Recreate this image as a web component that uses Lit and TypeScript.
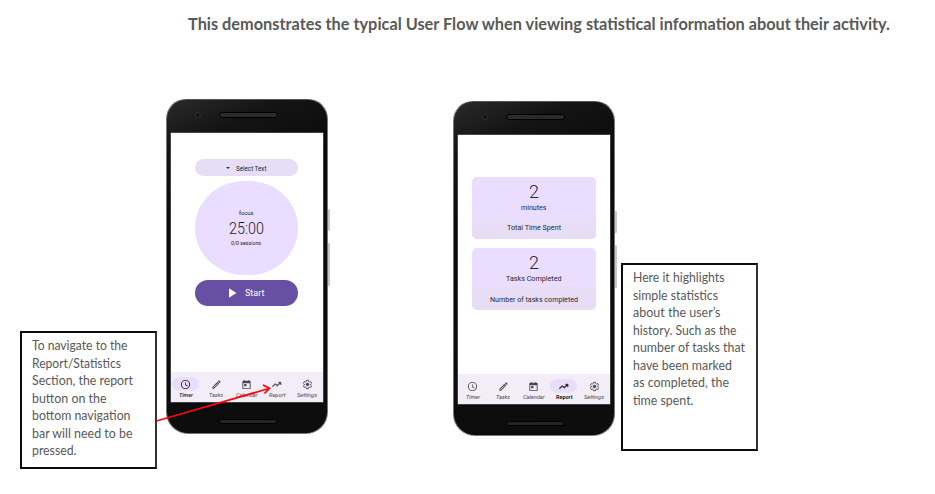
import { LitElement, html, svg, css } from "lit";
import { customElement, property } from "lit/decorators.js";

// One line of text, fitted to a given width and centred on its line height.
const line = (text: string, width: number, size: number, lh: number, cls = "") => html`
  <svg class="line ${cls}" width=${width} height=${lh}>
    <text x="0" y=${lh / 2 + size * 0.355} font-size=${size} textLength=${width} lengthAdjust="spacingAndGlyphs">${text}</text>
  </svg>`;

const lineStyles = css`
  .line { display: block; overflow: visible; flex: none; fill: currentColor; }
  .bold { font-weight: 700; }
  .medium { font-weight: 500; }
  .light { font-weight: 300; }
  .italic { font-style: italic; }
`;

const icons: Record<string, unknown> = {
  Timer: svg`<path d="M12 2a10 10 0 1 0 0 20 10 10 0 0 0 0-20zm0 18a8 8 0 1 1 0-16 8 8 0 0 1 0 16zm.5-13H11v6l5.2 3.2.8-1.3-4.5-2.7z"/>`,
  Tasks: svg`<path d="M14.06 9.02l.92.92L5.92 19H5v-.92l9.06-9.06M17.66 3c-.25 0-.51.1-.7.29l-1.83 1.83 3.75 3.75 1.83-1.83a1 1 0 0 0 0-1.41l-2.34-2.34A1 1 0 0 0 17.66 3zm-3.6 3.19L3 17.25V21h3.75L17.81 9.94l-3.75-3.75z"/>`,
  Calendar: svg`<path d="M19 4h-1V2h-2v2H8V2H6v2H5a2 2 0 0 0-2 2v14c0 1.1.9 2 2 2h14a2 2 0 0 0 2-2V6a2 2 0 0 0-2-2zm0 16H5V9h14v11zM7 11h5v5H7z"/>`,
  Report: svg`<path d="M16 7l2.1 2.1-4.7 4.2-4-3.6L2.6 15.6 4 17l5.5-4.8 4 3.6 6.1-5.3L22 13V7z" stroke="currentColor"/>`,
  Settings: svg`<path d="M10 2.8h4l.6 2.6 1.8 1 2.5-.8 2 3.5-1.9 1.8v2.2l1.9 1.8-2 3.5-2.5-.8-1.8 1-.6 2.6h-4l-.6-2.6-1.8-1-2.5.8-2-3.5L5 13.1v-2.2L3.1 9.1l2-3.5 2.5.8 1.8-1z" fill="none" stroke="currentColor" stroke-width="2"/><circle cx="12" cy="12" r="3.2" stroke="currentColor" stroke-width="1"/>`,
};

const tabs: [string, number][] = [
  ["Timer", 14], ["Tasks", 14], ["Calendar", 21.5], ["Report", 16.5], ["Settings", 20],
];

@customElement("phone-frame")
class PhoneFrame extends LitElement {
  @property() active = "Timer";

  static styles = [lineStyles, css`
    :host { display: block; position: relative; width: 162px; height: 335px; flex: none; font-family: Roboto, sans-serif; }
    .body { box-sizing: border-box; height: 100%; display: flex; flex-direction: column; align-items: center;
      border: 1px solid #777; border-top-color: #555; border-radius: 20px 20px 22px 22px;
      background: linear-gradient(155deg, #2a2a2a 0, #141414 13%, #0b0b0b 30%, #0d0d0d 100%); }
    .top { position: relative; height: 33px; width: 100%; flex: none; display: flex; justify-content: center; }
    .speaker { box-sizing: border-box; width: 59px; height: 6px; margin-top: 12px; margin-left: 2px; border: 1px solid #000; border-radius: 3px; background: #2b2b2b; }
    .camera { position: absolute; left: 28px; top: 12px; box-sizing: border-box; width: 6px; height: 6px; border-radius: 50%; border: 1px solid #30303a; background: #101018; }
    .screen { width: 152px; height: 269px; margin-left: -1px; background: #fff; display: flex; flex-direction: column; flex: none; box-shadow: 0 0 0 .5px #777; }
    .content { flex: 1; min-height: 0; }
    .nav { height: 30px; flex: none; display: flex; background: #f3edf7; color: #49454f; }
    .tab { flex: 1; display: flex; flex-direction: column; align-items: center; padding-top: 5px; }
    .pill { width: 27px; height: 14px; border-radius: 7px; display: flex; align-items: center; justify-content: center; }
    .on .pill { background: #e8def8; }
    .on { color: #1d1b20; }
    .icon { width: 11px; height: 11px; fill: currentColor; display: block; }
    .chin { box-sizing: border-box; width: 58px; height: 5px; margin: 17px 0 0 2px; border: 1px solid #000; border-radius: 3px; background: #242424; }
    .key { position: absolute; right: -2px; width: 2px; background: #c9c9c9; border-radius: 0 1px 1px 0; }
    .power { top: 110px; height: 22px; }
    .volume { top: 144px; height: 43px; }
  `];

  private labelClass(name: string) {
    if (name !== this.active) return "italic";
    return name === "Report" ? "bold" : "italic medium";
  }

  render() {
    return html`
      <div class="key power"></div><div class="key volume"></div>
      <div class="body">
        <div class="top"><div class="camera"></div><div class="speaker"></div></div>
        <div class="screen">
          <div class="content"><slot></slot></div>
          <div class="nav">
            ${tabs.map(([name, w]) => html`
              <div class="tab ${name === this.active ? "on" : ""}">
                <div class="pill"><svg class="icon" viewBox="0 0 24 24">${icons[name]}</svg></div>
                ${line(name, w, 5.6, 9, this.labelClass(name))}
              </div>`)}
          </div>
        </div>
        <div class="chin"></div>
      </div>`;
  }
}

@customElement("app-root")
class AppRoot extends LitElement {
  static styles = [lineStyles, css`
    :host { display: block; width: 935px; height: 494px; overflow: hidden; position: relative; background: #fff; font-family: Lato, sans-serif; color: #595959; }
    .title { padding: 12px 0 0 188px; }
    .flow { display: flex; align-items: flex-start; margin-top: 63px; padding-left: 20px; }
    .note { box-sizing: border-box; width: 137px; flex: none; border: 2px solid #0c0c0c; border-right-color: #333; background: #fff; }
    .left { height: 138px; margin: 232px 9px 0 0; padding: 4px 0 0 10px; }
    .right { height: 188px; margin: 164px 0 0 6px; padding: 4px 0 0 10px; }
    .second { margin: 2px 0 0 125px; }
    .timer { display: flex; flex-direction: column; align-items: center; padding-top: 26px; margin-right: 1px; color: #1d1b20; }
    .select, .start { width: 103px; display: flex; align-items: center; box-sizing: border-box; }
    .select { height: 17px; border-radius: 9px; background: #e6def6; gap: 6px; padding-left: 31px; }
    .caret { width: 0; border: 2px solid transparent; border-top: 2px solid #333; border-bottom: 0; }
    .dial { width: 103px; height: 94px; border-radius: 49px / 47px; background: #eaddff; margin: 5px 0; box-sizing: border-box; padding-top: 28px; display: flex; flex-direction: column; align-items: center; }
    .start { height: 26px; border-radius: 13px; background: #6750a4; color: #fff; gap: 8px; padding-left: 34px; }
    .play { width: 8px; height: 10px; background: #fff; clip-path: polygon(0 0, 100% 50%, 0 100%); }
    .stats { display: flex; flex-direction: column; align-items: center; gap: 9px; padding-top: 42px; color: #2a2730; }
    .card { width: 124px; height: 62px; border-radius: 5px; overflow: hidden; background: #eaddff; display: flex; flex-direction: column; align-items: center; flex: none; }
    .value { flex: 1; padding-top: 3px; display: flex; flex-direction: column; align-items: center; }
    .caption { width: 100%; display: flex; justify-content: center; align-items: center; background: #e7def6; }
    .short { height: 19px; box-sizing: border-box; padding-bottom: 5px; }
    .tall { height: 23px; }
    .arrow { position: absolute; left: 0; top: 0; pointer-events: none; fill: none; stroke: #f80808; stroke-width: 1.8; }
  `];

  render() {
    const left: [string, number][] = [
      ["To navigate to the", 95.5], ["Report/Statistics", 89], ["Section, the report", 101], ["button on the", 74.5],
      ["bottom navigation", 98.5], ["bar will need to be", 100.5], ["pressed.", 44.5],
    ];
    const right: [string, number][] = [
      ["Here it highlights", 91.5], ["simple statistics", 85], ["about the user’s", 87.5], ["history. Such as the", 103.5],
      ["number of tasks that", 112], ["have been marked", 99], ["as completed, the", 96], ["time spent.", 60.5],
    ];
    return html`
      <div class="title">${line("This demonstrates the typical User Flow when viewing statistical information about their activity.", 702, 16.8, 24, "bold")}</div>
      <div class="flow">
        <div class="note left">${left.map(([t, w]) => line(t, w, 12.7, 17.5))}</div>
        <phone-frame active="Timer">
          <div class="timer">
            <div class="select"><i class="caret"></i>${line("Select Text", 30.5, 7.1, 10)}</div>
            <div class="dial">
              ${line("focus", 14.5, 5.8, 8)}
              ${line("25:00", 35, 16.8, 22, "light")}
              ${line("0/0 sessions", 30, 5.8, 8)}
            </div>
            <div class="start"><div class="play"></div>${line("Start", 19.5, 9.3, 12)}</div>
          </div>
        </phone-frame>
        <phone-frame class="second" active="Report">
          <div class="stats">
            <div class="card">
              <div class="value">${line("2", 10, 18.5, 22, "light")}${line("minutes", 25.5, 7.2, 11)}</div>
              <div class="caption short">${line("Total Time Spent", 54, 7.3, 10)}</div>
            </div>
            <div class="card">
              <div class="value">${line("2", 10, 18.5, 22, "light")}${line("Tasks Completed", 55.5, 7.3, 11)}</div>
              <div class="caption tall">${line("Number of tasks completed", 88, 7.3, 10)}</div>
            </div>
          </div>
        </phone-frame>
        <div class="note right">${right.map(([t, w]) => line(t, w, 12.7, 17.5))}</div>
      </div>
      <svg class="arrow" width="935" height="494"><path d="M156.5 421 L269 388.5 M263 385 L269.5 388.3 L264.5 393.5"/></svg>`;
  }
}
